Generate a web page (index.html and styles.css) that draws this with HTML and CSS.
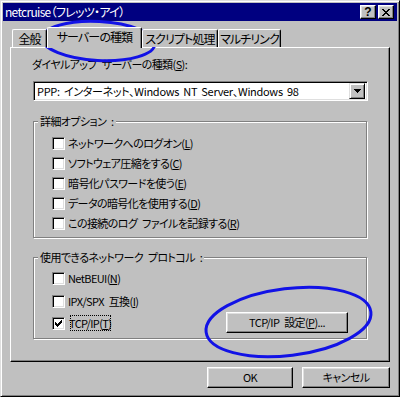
FILE: index.html
```html
<!DOCTYPE html>
<html lang="ja">
<head>
<meta charset="utf-8">
<title>netcruise</title>
<link rel="stylesheet" href="styles.css">
</head>
<body>
<div class="window">
  <div class="titlebar">
    <span class="title">netcruise（フレッツ・アイ）</span>
    <div class="tb-buttons">
      <span class="tb-btn help">?</span>
      <span class="tb-btn close"><svg width="8" height="7" viewBox="0 0 8 7"><path d="M0 0h2v1h-2zM6 0h2v1h-2zM1 1h2v1h-2zM5 1h2v1h-2zM2 2h4v1h-4zM3 3h2v1h-2zM2 4h4v1h-4zM1 5h2v1h-2zM5 5h2v1h-2zM0 6h2v1h-2zM6 6h2v1h-2z" fill="#000"/></svg></span>
    </div>
  </div>
  <div class="body">
    <div class="tabs">
      <div class="tab t1">全般</div>
      <div class="tab t2 active">サーバーの種類</div>
      <div class="tab t3">スクリプト処理</div>
      <div class="tab t4">マルチリンク</div>
    </div>
    <div class="panel">
      <div class="field-label">ダイヤルアップ サーバーの種類(<u>S</u>):</div>
      <div class="select">
        <span class="select-value">PPP: インターネット、Windows NT Server、Windows 98</span>
        <span class="select-btn"><svg width="7" height="4" viewBox="0 0 7 4"><path d="M0 0h7v1h-7zM1 1h5v1h-5zM2 2h3v1h-3zM3 3h1v1h-1z" fill="#000"/></svg></span>
      </div>
      <div class="group g1">
        <div class="group-title">詳細オプション :</div>
        <div class="checks">
          <div class="row"><span class="cb"></span><span class="lbl">ネットワークへのログオン(<u>L</u>)</span></div>
          <div class="row"><span class="cb"></span><span class="lbl">ソフトウェア圧縮をする(<u>C</u>)</span></div>
          <div class="row"><span class="cb"></span><span class="lbl">暗号化パスワードを使う(<u>E</u>)</span></div>
          <div class="row"><span class="cb"></span><span class="lbl">データの暗号化を使用する(<u>D</u>)</span></div>
          <div class="row"><span class="cb"></span><span class="lbl">この接続のログ ファイルを記録する(<u>R</u>)</span></div>
        </div>
      </div>
      <div class="group g2">
        <div class="group-title">使用できるネットワーク プロトコル :</div>
        <div class="g2-body">
          <div class="checks">
            <div class="row r23"><span class="cb"></span><span class="lbl">NetBEUI(<u>N</u>)</span></div>
            <div class="row"><span class="cb"></span><span class="lbl">IPX/SPX 互換(<u>I</u>)</span></div>
            <div class="row"><span class="cb"><svg width="7" height="7" viewBox="0 0 7 7"><path d="M6 0h1v1h-1zM5 1h2v1h-2zM0 2h1v1h-1zM4 2h3v1h-3zM0 3h2v1h-2zM3 3h3v1h-3zM0 4h5v1h-5zM1 5h3v1h-3zM2 6h1v1h-1z" fill="#000"/></svg></span><span class="lbl focus">TCP/IP(<u>T</u>)</span></div>
          </div>
          <button class="btn tcp">TCP/IP 設定(<u>P</u>)...</button>
        </div>
      </div>
    </div>
    <div class="actions">
      <button class="btn ok">OK</button>
      <button class="btn cancel">キャンセル</button>
    </div>
  </div>
  <svg class="marks" width="400" height="397" viewBox="0 0 400 397">
    <ellipse cx="98.5" cy="41" rx="56.5" ry="19.5" transform="rotate(3 98.5 41)" fill="none" stroke="#1212e6" stroke-width="3"/>
    <ellipse cx="288.5" cy="322" rx="83" ry="33.5" transform="rotate(-7 288.5 322)" fill="none" stroke="#1212e6" stroke-width="3"/>
  </svg>
</div>
</body>
</html>
```
FILE: styles.css
```css
* { box-sizing: border-box; }
html, body { margin: 0; padding: 0; }
body {
  width: 400px;
  height: 397px;
  overflow: hidden;
  background: #c0c0c0;
  font-family: "Noto Sans CJK JP", "Noto Sans", sans-serif;
  font-size: 11px;
  letter-spacing: -0.6px;
  word-spacing: 3px;
  font-feature-settings: "palt";
  color: #000;
}
u { text-decoration: underline; text-underline-offset: 1px; }

.window {
  position: relative;
  width: 400px;
  height: 397px;
  background: #c0c0c0;
  border: 1px solid;
  border-color: #dfdfdf #000 #000 #dfdfdf;
  box-shadow: inset 1px 1px #fff, inset -1px -1px #808080;
  padding: 2px;
  display: flex;
  flex-direction: column;
}

.titlebar {
  height: 18px;
  flex: none;
  background: #000080;
  color: #fff;
  display: flex;
  align-items: center;
  padding: 0 3px 0 2px;
}
.title { flex: 1; line-height: 18px; white-space: nowrap; font-size: 12px; letter-spacing: -0.7px; }
.tb-buttons { display: flex; gap: 2px; }
.tb-btn {
  width: 16px;
  height: 14px;
  background: #c0c0c0;
  border: 1px solid;
  border-color: #fff #000 #000 #fff;
  box-shadow: inset -1px -1px #808080, inset 1px 1px #dfdfdf;
  display: flex;
  align-items: center;
  justify-content: center;
  color: #000;
}
.tb-btn.help {
  font-family: "Liberation Sans", sans-serif;
  font-weight: bold;
  font-size: 12px;
  line-height: 12px;
  letter-spacing: 0;
  font-feature-settings: normal;
}

.body {
  flex: 1;
  padding: 6px 7px 0 7px;
  display: flex;
  flex-direction: column;
}

.tabs {
  display: flex;
  align-items: flex-end;
  height: 20px;
  padding-left: 2px;
  position: relative;
  z-index: 1;
}
.tab {
  height: 18px;
  background: #c0c0c0;
  border-top: 1px solid #fff;
  border-left: 1px solid #fff;
  border-right: 1px solid #000;
  border-radius: 2px 2px 0 0;
  box-shadow: inset -1px 0 #808080;
  display: flex;
  align-items: center;
  justify-content: center;
  white-space: nowrap;
  line-height: 16px;
  font-size: 12px;
  letter-spacing: -0.9px;
}
.t1 { width: 35px; }
.t2 { width: 95px; }
.t3 { width: 76px; }
.t4 { width: 63px; }
.tab.active { height: 21px; margin-bottom: -1px; padding-bottom: 2px; }

.panel {
  height: 315px;
  flex: none;
  border: 1px solid;
  border-color: #fff #000 #000 #fff;
  box-shadow: inset -1px -1px #808080;
  padding: 8px 0 0 22px;
}
.field-label { line-height: 16px; margin-left: -1px; white-space: nowrap; }

.select {
  margin-top: 9px;
  width: 335px;
  height: 20px;
  background: #fff;
  border: 1px solid;
  border-color: #808080 #fff #fff #808080;
  box-shadow: inset 1px 1px #000, inset -1px -1px #dfdfdf;
  display: flex;
  align-items: center;
  padding: 2px;
}
.select-value { flex: 1; padding-left: 1px; white-space: nowrap; line-height: 16px; letter-spacing: -0.3px; word-spacing: 2px; }
.select-btn {
  width: 16px;
  height: 16px;
  background: #c0c0c0;
  border: 1px solid;
  border-color: #dfdfdf #000 #000 #dfdfdf;
  box-shadow: inset 1px 1px #fff, inset -1px -1px #808080;
  display: flex;
  align-items: center;
  justify-content: center;
}

.group {
  width: 334px;
  border: 1px solid #808080;
  box-shadow: inset 1px 1px #fff, 1px 1px #fff;
  padding-left: 18px;
}
.g1 { margin-top: 20px; padding-bottom: 4px; }
.g2 { margin-top: 19px; padding-bottom: 3px; }
.group-title {
  display: table;
  margin: -8px 0 0 -14px;
  padding: 0 2px;
  background: #c0c0c0;
  line-height: 14px;
  white-space: nowrap;
}
.g1 .checks { padding-top: 5px; }
.g2-body { display: flex; padding-top: 4px; }
.g2-body .checks { flex: 1; }

.row { display: flex; align-items: flex-start; height: 20px; }
.g2 .row { height: 22px; }
.g2 .row.r23 { height: 23px; }
.cb {
  width: 13px;
  height: 13px;
  margin-top: 4px;
  flex: none;
  background: #fff;
  border: 1px solid;
  border-color: #808080 #fff #fff #808080;
  box-shadow: inset 1px 1px #000, inset -1px -1px #dfdfdf;
  padding: 2px;
  display: flex;
}
.cb svg { display: block; }
.lbl { margin-left: 3px; line-height: 20px; white-space: nowrap; }
.lbl.focus { outline: 1px dotted #000; outline-offset: -3px; padding: 0 2px 0 1px; }

.btn {
  font: inherit;
  letter-spacing: inherit;
  word-spacing: inherit;
  color: #000;
  background: #c0c0c0;
  border: 1px solid;
  border-color: #fff #000 #000 #fff;
  box-shadow: inset -1px -1px #808080, inset 1px 1px #dfdfdf;
  height: 21px;
  padding: 0;
  line-height: 17px;
  white-space: nowrap;
}
.tcp { width: 122px; align-self: flex-end; margin: 0 18px 2px 0; }

.actions {
  display: flex;
  justify-content: flex-end;
  gap: 9px;
  margin-top: 5px;
}
.ok { width: 86px; }
.cancel { width: 88px; }

.marks { position: absolute; left: -1px; top: -1px; pointer-events: none; }
```
